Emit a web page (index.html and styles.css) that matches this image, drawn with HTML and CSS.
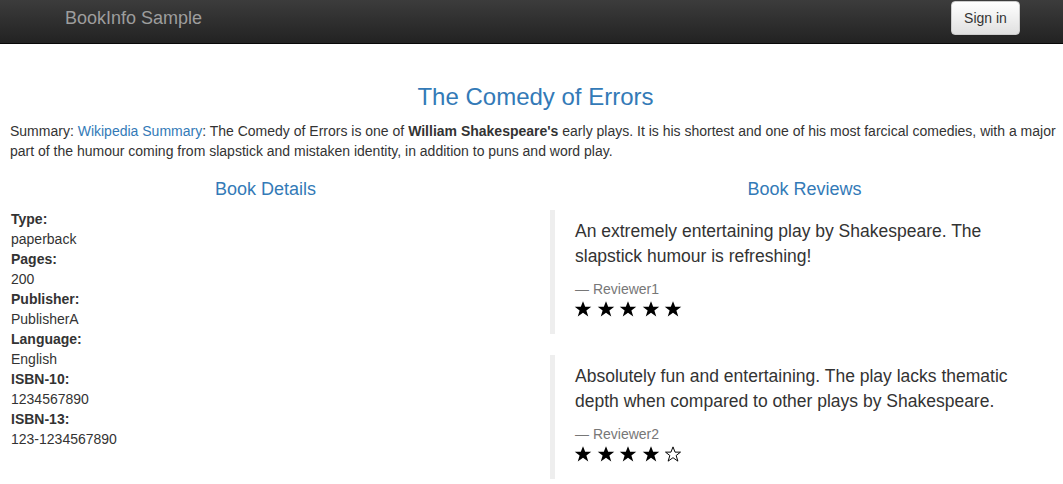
FILE: index.html
```html
<!DOCTYPE html>
<html>
<head>
<meta charset="utf-8">
<title>BookInfo Sample</title>
<link rel="stylesheet" href="styles.css">
</head>
<body>
<nav class="navbar">
  <a class="brand" href="#">BookInfo Sample</a>
  <button class="btn-signin" type="button">Sign in</button>
</nav>
<main class="page">
  <h3 class="title">The Comedy of Errors</h3>
  <p class="summary">Summary: <a href="#">Wikipedia Summary</a>: The Comedy of Errors is one of <b>William Shakespeare's</b> early plays. It is his shortest and one of his most farcical comedies, with a major part of the humour coming from slapstick and mistaken identity, in addition to puns and word play.</p>
  <div class="row">
    <section class="col col-left">
      <h4 class="col-title">Book Details</h4>
      <dl class="details">
        <dt>Type:</dt><dd>paperback</dd>
        <dt>Pages:</dt><dd>200</dd>
        <dt>Publisher:</dt><dd>PublisherA</dd>
        <dt>Language:</dt><dd>English</dd>
        <dt>ISBN-10:</dt><dd>1234567890</dd>
        <dt>ISBN-13:</dt><dd>123-1234567890</dd>
      </dl>
    </section>
    <section class="col col-right">
      <h4 class="col-title reviews-title">Book Reviews</h4>
      <blockquote class="review">
        <p>An extremely entertaining play by Shakespeare. The slapstick humour is refreshing!</p>
        <footer>— Reviewer1</footer>
        <div class="stars">
          <svg class="star" viewBox="0 0 24 24"><polygon points="12,1.5 14.9,9 23,9 16.5,14 19,22 12,17 5,22 7.5,14 1,9 9.1,9"/></svg>
          <svg class="star" viewBox="0 0 24 24"><polygon points="12,1.5 14.9,9 23,9 16.5,14 19,22 12,17 5,22 7.5,14 1,9 9.1,9"/></svg>
          <svg class="star" viewBox="0 0 24 24"><polygon points="12,1.5 14.9,9 23,9 16.5,14 19,22 12,17 5,22 7.5,14 1,9 9.1,9"/></svg>
          <svg class="star" viewBox="0 0 24 24"><polygon points="12,1.5 14.9,9 23,9 16.5,14 19,22 12,17 5,22 7.5,14 1,9 9.1,9"/></svg>
          <svg class="star" viewBox="0 0 24 24"><polygon points="12,1.5 14.9,9 23,9 16.5,14 19,22 12,17 5,22 7.5,14 1,9 9.1,9"/></svg>
        </div>
      </blockquote>
      <blockquote class="review">
        <p>Absolutely fun and entertaining. The play lacks thematic depth when compared to other plays by Shakespeare.</p>
        <footer>— Reviewer2</footer>
        <div class="stars">
          <svg class="star" viewBox="0 0 24 24"><polygon points="12,1.5 14.9,9 23,9 16.5,14 19,22 12,17 5,22 7.5,14 1,9 9.1,9"/></svg>
          <svg class="star" viewBox="0 0 24 24"><polygon points="12,1.5 14.9,9 23,9 16.5,14 19,22 12,17 5,22 7.5,14 1,9 9.1,9"/></svg>
          <svg class="star" viewBox="0 0 24 24"><polygon points="12,1.5 14.9,9 23,9 16.5,14 19,22 12,17 5,22 7.5,14 1,9 9.1,9"/></svg>
          <svg class="star" viewBox="0 0 24 24"><polygon points="12,1.5 14.9,9 23,9 16.5,14 19,22 12,17 5,22 7.5,14 1,9 9.1,9"/></svg>
          <svg class="star star-empty" viewBox="0 0 24 24"><polygon points="12,2.5 14.7,9.5 22,9.5 16.2,14 18.5,21.5 12,16.9 5.5,21.5 7.8,14 2,9.5 9.3,9.5"/></svg>
        </div>
      </blockquote>
    </section>
  </div>
</main>
</body>
</html>
```

FILE: styles.css
```css
* { box-sizing: border-box; }
html, body { margin: 0; padding: 0; }
body {
  font-family: "Liberation Sans", Arial, Helvetica, sans-serif;
  font-size: 14px;
  line-height: 20px;
  color: #333;
  background: #fff;
}
a { color: #337ab7; text-decoration: none; }

.navbar {
  height: 44px;
  display: flex;
  align-items: flex-start;
  justify-content: space-between;
  background: linear-gradient(to bottom, #3c3c3c 0%, #222 100%);
  border-bottom: 1px solid #080808;
  padding: 0 43px 0 65px;
}
.brand {
  color: #9d9d9d;
  font-size: 18px;
  line-height: 20px;
  padding-top: 8px;
}
.btn-signin {
  margin-top: 1px;
  height: 34px;
  width: 69px;
  padding: 0;
  font-family: inherit;
  font-size: 14px;
  color: #333;
  background: linear-gradient(to bottom, #fff 0%, #e0e0e0 100%);
  border: 1px solid #ccc;
  border-radius: 4px;
  box-shadow: inset 0 1px 0 rgba(255,255,255,.15), 0 1px 1px rgba(0,0,0,.075);
}

.title {
  margin: 40px 0 0;
  padding-left: 8px;
  text-align: center;
  font-size: 24px;
  font-weight: 500;
  line-height: 26px;
  color: #337ab7;
}
.summary {
  margin: 11px 0 0;
  padding: 0 0 0 10px;
}

.row {
  display: grid;
  grid-template-columns: 531px 1fr;
  margin-top: 18px;
}
.col-title {
  margin: 0;
  font-size: 18px;
  font-weight: 500;
  line-height: 20px;
  color: #337ab7;
  text-align: center;
}
.reviews-title { margin-left: -4px; }

.details {
  margin: 10px 0 0;
  padding-left: 11px;
}
.details dt { font-weight: bold; }
.details dd { margin: 0; }

.col-right { padding-left: 19px; }
.review {
  margin: 11px 0 20px;
  padding: 9px 20px 15px 20px;
  border-left: 5px solid #eee;
  font-size: 17.5px;
  line-height: 25px;
}
.review + .review { margin-top: 21px; }
.review p { margin: 0 0 10px; }
.review footer {
  font-size: 14px;
  line-height: 20px;
  color: #777;
}
.stars {
  display: flex;
  gap: 4.5px;
  height: 20px;
  align-items: center;
  margin-left: -1px;
}
.star {
  width: 18px;
  height: 18px;
  fill: #000;
}
.star-empty {
  fill: #fff;
  stroke: #000;
  stroke-width: 1.3;
  stroke-linejoin: miter;
}
```
